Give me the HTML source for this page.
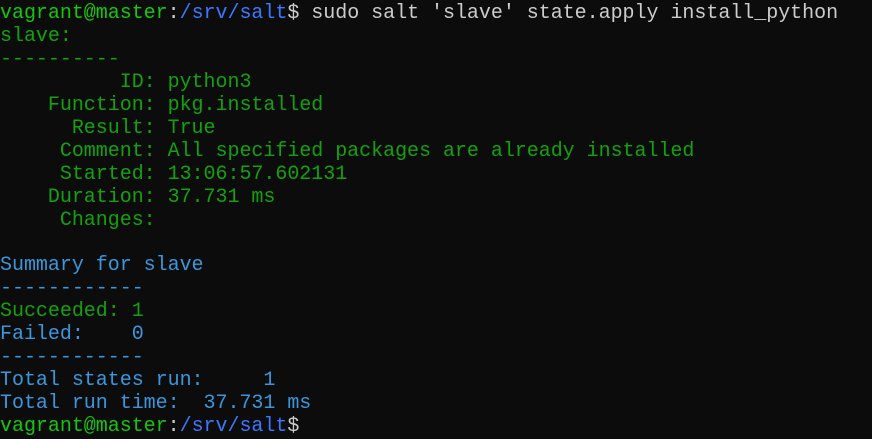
<!DOCTYPE html><html><head><style>
body{margin:0;background:#0c0c0c;width:872px;height:438px;overflow:hidden}
pre{margin:0;padding:3px 0 0 0;font-family:"Liberation Mono",monospace;font-size:20px;line-height:22.95px;color:#cccccc;letter-spacing:-0.03px}
.g{color:#16c60c}.o{color:#13a10e}.b{color:#3b78ff}.c{color:#3a96dd}
</style></head><body><pre><span class="g">vagrant@master</span>:<span class="b">/srv/salt</span>$ sudo salt 'slave' state.apply install_python
<span class="o">slave:
----------
          ID: python3
    Function: pkg.installed
      Result: True
     Comment: All specified packages are already installed
     Started: 13:06:57.602131
    Duration: 37.731 ms
     Changes:</span>

<span class="c">Summary for slave
------------</span>
<span class="o">Succeeded: 1</span>
<span class="c">Failed:    0
------------
Total states run:     1
Total run time:  37.731 ms</span>
<span class="g">vagrant@master</span>:<span class="b">/srv/salt</span>$</pre></body></html>
